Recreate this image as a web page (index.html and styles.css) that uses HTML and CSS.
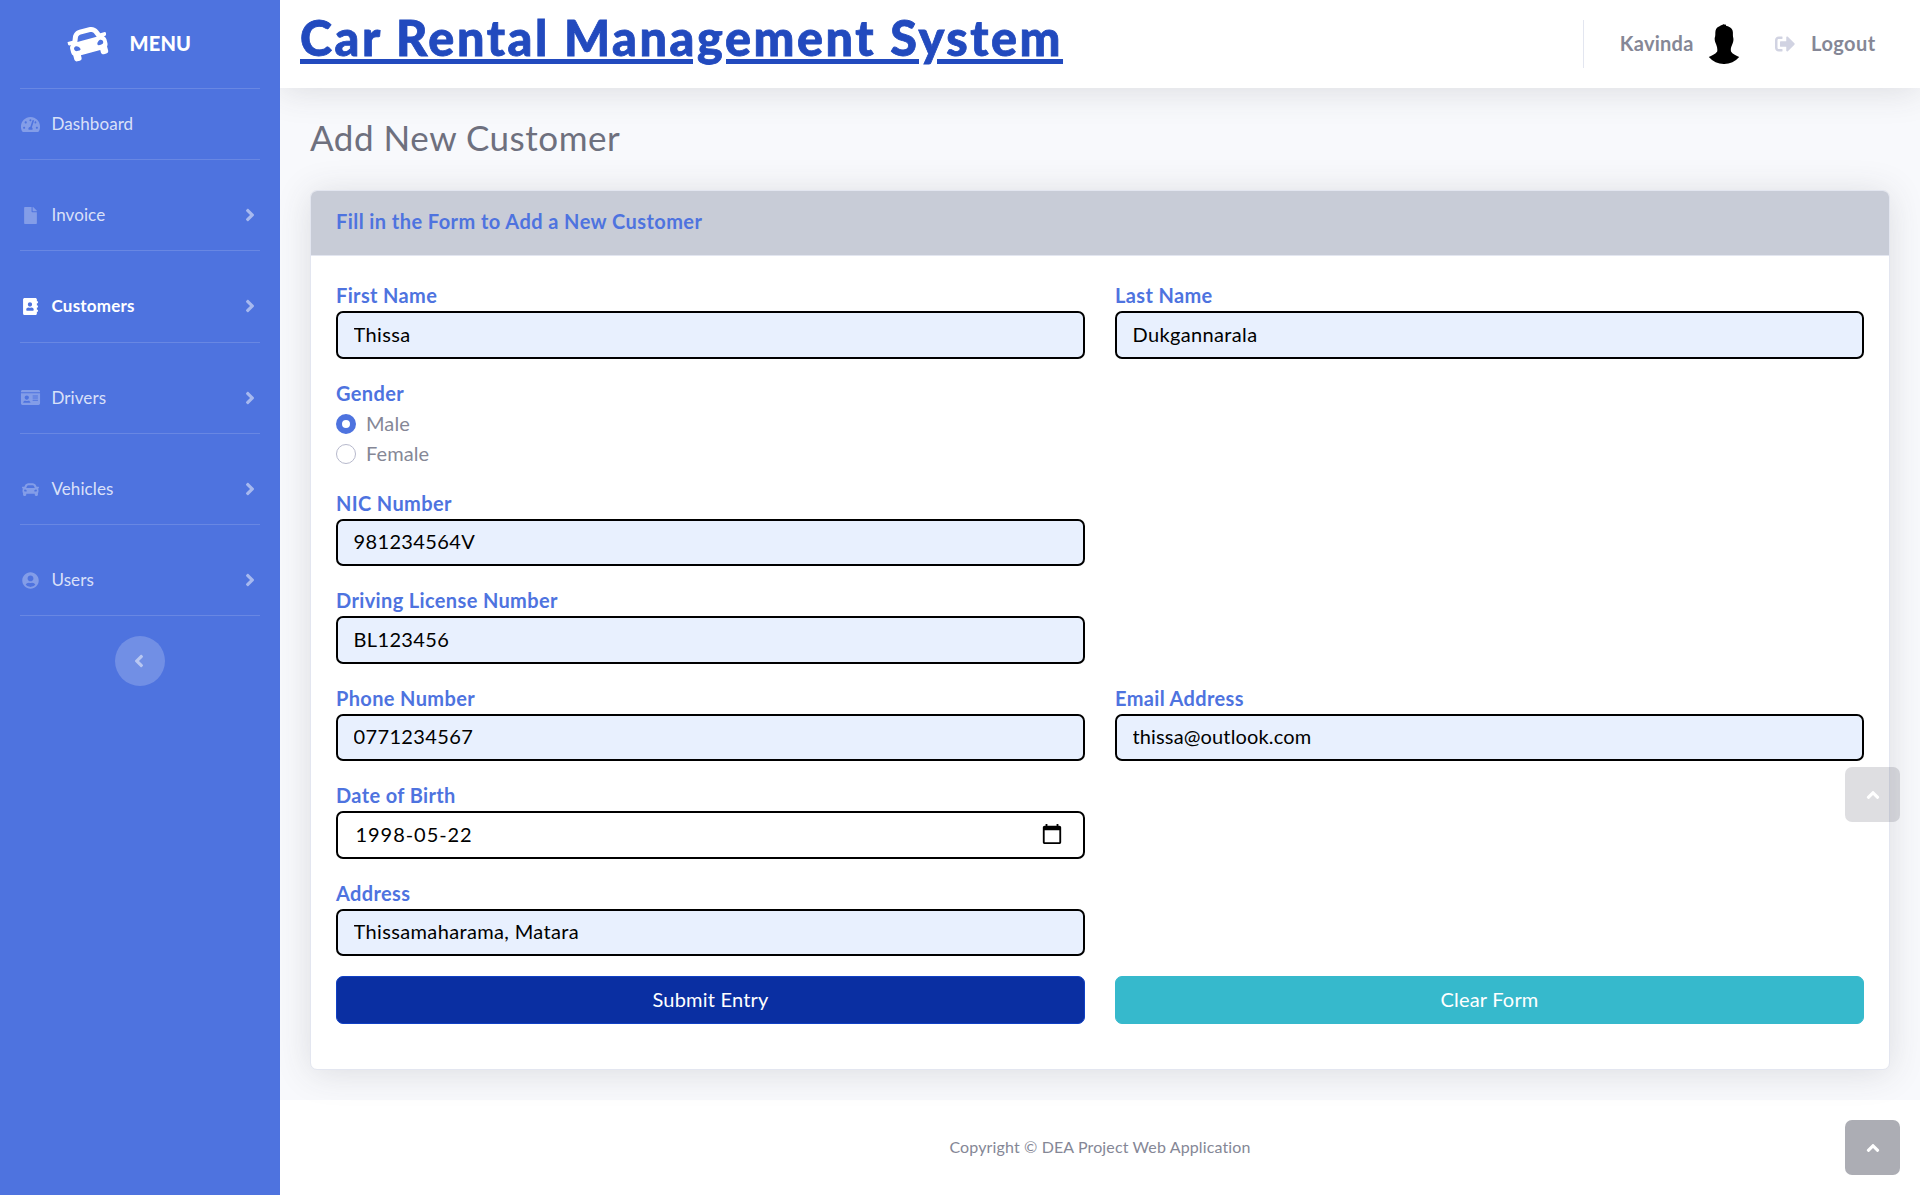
FILE: index.html
```html
<!DOCTYPE html>
<html lang="en">
<head>
<meta charset="utf-8">
<title>Car Rental Management System</title>
<link rel="stylesheet" href="styles.css">
</head>
<body>
<svg class="sprite" aria-hidden="true">
  <symbol id="car" viewBox="0 0 512 512"><path d="M499.99 176h-59.87l-16.64-41.6C406.38 91.63 365.57 64 319.5 64h-127c-46.06 0-86.88 27.63-103.99 70.4L71.87 176H12.01C4.2 176-1.53 183.34.37 190.91l6 24C7.7 220.25 12.5 224 18.01 224h20.07C24.65 235.73 16 252.78 16 272v48c0 16.12 6.16 30.67 16 41.93V416c0 17.67 14.33 32 32 32h32c17.67 0 32-14.33 32-32v-32h256v32c0 17.67 14.33 32 32 32h32c17.67 0 32-14.33 32-32v-54.07c9.84-11.25 16-25.8 16-41.93v-48c0-19.22-8.65-36.27-22.07-48H494c5.51 0 10.31-3.75 11.64-9.09l6-24c1.89-7.57-3.84-14.91-11.65-14.91zm-352.06-17.83c7.29-18.22 24.94-30.17 44.57-30.17h127c19.63 0 37.28 11.95 44.57 30.17L384 208H128l19.93-49.83zM96 319.8c-19.2 0-32-12.76-32-31.9S76.8 256 96 256s48 28.71 48 47.85-28.8 15.95-48 15.95zm320 0c-19.2 0-48 3.19-48-15.95S396.8 256 416 256s32 12.76 32 31.9-12.8 31.9-32 31.9z"/></symbol>
  <symbol id="gauge" viewBox="0 0 576 512"><path d="M288 32C128.94 32 0 160.94 0 320c0 52.8 14.25 102.26 39.06 144.8 5.61 9.62 16.3 15.2 27.44 15.2h443c11.14 0 21.83-5.58 27.44-15.2C561.75 422.26 576 372.8 576 320c0-159.06-128.94-288-288-288zm0 64c14.71 0 26.58 10.13 30.32 23.65-1.11 2.26-2.64 4.23-3.45 6.67l-9.22 27.67c-5.13 3.49-10.97 6.01-17.64 6.01-17.67 0-32-14.33-32-32S270.33 96 288 96zM96 384c-17.67 0-32-14.33-32-32s14.33-32 32-32 32 14.33 32 32-14.33 32-32 32zm48-160c-17.67 0-32-14.33-32-32s14.33-32 32-32 32 14.33 32 32-14.33 32-32 32zm246.77-72.41l-61.33 184C343.13 347.33 352 364.54 352 384c0 11.72-3.38 22.55-8.88 32H232.88c-5.5-9.45-8.88-20.28-8.88-32 0-33.94 26.5-61.43 59.9-63.59l61.34-184.01c4.17-12.56 17.73-19.45 30.36-15.17 12.57 4.19 19.35 17.79 15.17 30.36zm14.66 57.2l15.52-46.55c3.47-1.29 7.13-2.23 11.05-2.23 17.67 0 32 14.33 32 32s-14.33 32-32 32c-11.38-.01-20.89-6.28-26.57-15.22zM480 384c-17.67 0-32-14.33-32-32s14.33-32 32-32 32 14.33 32 32-14.33 32-32 32z"/></symbol>
  <symbol id="file" viewBox="0 0 384 512"><path d="M224 136V0H24C10.7 0 0 10.7 0 24v464c0 13.3 10.7 24 24 24h336c13.3 0 24-10.7 24-24V160H248c-13.2 0-24-10.8-24-24zm160-14.1v6.1H256V0h6.1c6.4 0 12.5 2.5 17 7l97.9 98c4.5 4.5 7 10.6 7 16.9z"/></symbol>
  <symbol id="book" viewBox="0 0 448 512"><path d="M436 160c6.6 0 12-5.4 12-12v-40c0-6.6-5.4-12-12-12h-20V48c0-26.5-21.5-48-48-48H48C21.5 0 0 21.5 0 48v416c0 26.5 21.5 48 48 48h320c26.5 0 48-21.5 48-48v-48h20c6.6 0 12-5.4 12-12v-40c0-6.6-5.4-12-12-12h-20v-64h20c6.6 0 12-5.4 12-12v-40c0-6.6-5.4-12-12-12h-20v-64h20zm-228-32c35.3 0 64 28.7 64 64s-28.7 64-64 64-64-28.7-64-64 28.7-64 64-64zm112 236.8c0 10.6-10 19.2-22.4 19.2H118.4C106 384 96 375.4 96 364.8v-19.2c0-31.8 30.1-57.6 67.2-57.6h5c12.3 5.1 25.7 8 39.8 8s27.6-2.9 39.8-8h5c37.1 0 67.2 25.8 67.2 57.6v19.2z"/></symbol>
  <symbol id="idcard" viewBox="0 0 576 512"><path d="M528 32H48C21.5 32 0 53.5 0 80v16h576V80c0-26.5-21.5-48-48-48zM0 432c0 26.5 21.5 48 48 48h480c26.5 0 48-21.5 48-48V128H0v304zm352-232c0-4.4 3.6-8 8-8h144c4.4 0 8 3.6 8 8v16c0 4.4-3.6 8-8 8H360c-4.4 0-8-3.6-8-8v-16zm0 64c0-4.4 3.6-8 8-8h144c4.4 0 8 3.6 8 8v16c0 4.4-3.6 8-8 8H360c-4.4 0-8-3.6-8-8v-16zm0 64c0-4.4 3.6-8 8-8h144c4.4 0 8 3.6 8 8v16c0 4.4-3.6 8-8 8H360c-4.4 0-8-3.6-8-8v-16zM176 192c35.3 0 64 28.7 64 64s-28.7 64-64 64-64-28.7-64-64 28.7-64 64-64zM67.1 396.2C75.5 370.5 99.6 352 128 352h8.2c12.3 5.1 25.7 8 39.8 8s27.6-2.9 39.8-8h8.2c28.4 0 52.5 18.5 60.9 44.2 3.2 9.9-5.2 19.8-15.6 19.8H82.7c-10.4 0-18.8-10-15.6-19.8z"/></symbol>
  <symbol id="user" viewBox="0 0 496 512"><path d="M248 8C111 8 0 119 0 256s111 248 248 248 248-111 248-248S385 8 248 8zm0 96c48.6 0 88 39.4 88 88s-39.4 88-88 88-88-39.4-88-88 39.4-88 88-88zm0 344c-58.7 0-111.3-26.6-146.5-68.2 18.8-35.4 55.6-59.8 98.5-59.8 2.4 0 4.8.4 7.1 1.1 13 4.2 26.6 6.9 40.9 6.9 14.3 0 28-2.7 40.9-6.9 2.3-.7 4.7-1.1 7.1-1.1 42.9 0 79.7 24.4 98.5 59.8C359.3 421.4 306.7 448 248 448z"/></symbol>
  <symbol id="logout" viewBox="0 0 512 512"><path d="M497 273L329 441c-15 15-41 4.5-41-17v-96H152c-13.3 0-24-10.7-24-24v-96c0-13.3 10.7-24 24-24h136V88c0-21.4 25.9-32 41-17l168 168c9.3 9.4 9.3 24.6 0 34zM192 436v-40c0-6.6-5.4-12-12-12H96c-17.7 0-32-14.3-32-32V160c0-17.7 14.3-32 32-32h84c6.6 0 12-5.4 12-12V76c0-6.6-5.4-12-12-12H96c-53 0-96 43-96 96v192c0 53 43 96 96 96h84c6.6 0 12-5.4 12-12z"/></symbol>
  <symbol id="angle" viewBox="0 0 256 512"><path d="M224.3 273l-136 136c-9.4 9.4-24.6 9.4-33.9 0l-22.6-22.6c-9.4-9.4-9.4-24.6 0-33.9l96.4-96.4-96.4-96.4c-9.4-9.4-9.4-24.6 0-33.9L54.3 103c9.4-9.4 24.6-9.4 33.9 0l136 136c9.5 9.4 9.5 24.6.1 34z"/></symbol>
</svg>

<div class="wrapper">
  <nav class="sidebar">
    <a class="brand"><svg class="brand-icon"><use href="#car"/></svg><span class="brand-text">MENU</span></a>
    <ul class="nav">
      <li class="nav-item dashboard"><a class="nav-link"><svg class="nav-icon"><use href="#gauge"/></svg><span>Dashboard</span></a></li>
      <li class="nav-item"><a class="nav-link"><svg class="nav-icon"><use href="#file"/></svg><span>Invoice</span><svg class="chevron"><use href="#angle"/></svg></a></li>
      <li class="nav-item active"><a class="nav-link"><svg class="nav-icon"><use href="#book"/></svg><span>Customers</span><svg class="chevron"><use href="#angle"/></svg></a></li>
      <li class="nav-item"><a class="nav-link"><svg class="nav-icon"><use href="#idcard"/></svg><span>Drivers</span><svg class="chevron"><use href="#angle"/></svg></a></li>
      <li class="nav-item"><a class="nav-link"><svg class="nav-icon"><use href="#car"/></svg><span>Vehicles</span><svg class="chevron"><use href="#angle"/></svg></a></li>
      <li class="nav-item"><a class="nav-link"><svg class="nav-icon"><use href="#user"/></svg><span>Users</span><svg class="chevron"><use href="#angle"/></svg></a></li>
    </ul>
    <button class="collapse"><svg class="chevron left"><use href="#angle"/></svg></button>
  </nav>

  <div class="content">
    <header class="topbar">
      <h1 class="site-title">Car Rental Management System</h1>
      <div class="topbar-right">
        <div class="divider"></div>
        <span class="user-name">Kavinda</span>
        <svg class="avatar" viewBox="0 0 40 40"><path d="M20 0C19 .8 17 1.2 15.500 2.200C12.500 3.500 11.300 5.500 11.300 9C11.400 11 11.200 12.500 10.700 14C10.500 16.500 11.200 18.500 12.200 20.500C13.200 23 13.600 25.500 13.200 27.500C11.500 30.300 8.500 31 4.800 33A20 20 0 0 0 35.200 33C31.500 31 28.500 30.300 27 27.500C26.500 25.500 27 23 28.200 20.500C29.200 18.500 29.700 16 29.300 14C28.900 12.500 28.900 11 28.900 8.500C28.700 5.500 27.500 3.400 22 1.800L22 .2L21 1Z"/></svg>
        <svg class="logout-icon"><use href="#logout"/></svg>
        <span class="logout-text">Logout</span>
      </div>
    </header>

    <main class="page">
      <h3 class="page-title">Add New Customer</h3>
      <section class="card">
        <div class="card-header">Fill in the Form to Add a New Customer</div>
        <form class="card-body">
          <label class="field"><span class="label">First Name</span><input class="control" value="Thissa"></label>
          <label class="field"><span class="label">Last Name</span><input class="control" value="Dukgannarala"></label>
          <div class="field first-col"><span class="label">Gender</span>
            <label class="radio"><i class="dot checked"></i><span class="radio-text">Male</span></label>
            <label class="radio"><i class="dot"></i><span class="radio-text">Female</span></label>
          </div>
          <label class="field first-col"><span class="label">NIC Number</span><input class="control" value="981234564V"></label>
          <label class="field first-col"><span class="label">Driving License Number</span><input class="control" value="BL123456"></label>
          <label class="field first-col"><span class="label">Phone Number</span><input class="control" value="0771234567"></label>
          <label class="field"><span class="label">Email Address</span><input class="control email" value="thissa@outlook.com"></label>
          <label class="field first-col"><span class="label">Date of Birth</span>
            <span class="control date">1998-05-22<svg class="calendar" viewBox="0 0 24 24"><path d="M20 3h-1V1h-2v2H7V1H5v2H4c-1.100 0-2 .9-2 2v16c0 1.100.9 2 2 2h16c1.100 0 2-.9 2-2V5c0-1.100-.9-2-2-2zm0 18H4V8h16v13z"/></svg></span></label>
          <label class="field first-col"><span class="label">Address</span><input class="control" value="Thissamaharama, Matara"></label>
          <button type="button" class="btn submit first-col">Submit Entry</button>
          <button type="button" class="btn clear">Clear Form</button>
        </form>
      </section>
    </main>

    <footer class="footer">Copyright © DEA Project Web Application</footer>
  </div>
</div>
<a class="to-top fading"><svg class="chevron up"><use href="#angle"/></svg></a>
<a class="to-top"><svg class="chevron up"><use href="#angle"/></svg></a>
</body>
</html>
```
FILE: styles.css
```css
* { box-sizing: border-box; }
body {
  margin: 0;
  height: 1196px;
  position: relative;
  overflow: hidden;
  background: #fff;
  color: #858796;
  font: 400 20px/30px Lato, "Open Sans", sans-serif;
}
.sprite { position: absolute; width: 0; height: 0; }
svg { fill: currentColor; flex: none; display: block; }
.wrapper { display: flex; height: 1195px; }

/* Sidebar */
.sidebar {
  width: 280px;
  flex: none;
  background: #4e73df;
  color: #fff;
  display: flex;
  flex-direction: column;
  align-items: center;
}
.brand {
  height: 88px;
  width: 100%;
  display: flex;
  align-items: center;
  padding: 0 0 3px 68px;
  gap: 21.500px;
}
.brand-icon { width: 40px; height: 40px; transform: rotate(-15deg); }
.brand-text { font-weight: 900; letter-spacing: .2px; }
.nav { list-style: none; margin: 0; padding: 0; width: 240px; }
.nav-item {
  height: 91.300px;
  border-bottom: 1px solid rgba(255,255,255,.15);
  display: flex;
  align-items: center;
  padding-top: 20px;
}
.nav-item.dashboard { height: 72px; padding-top: 0; border-top: 1px solid rgba(255,255,255,.15); }
.nav-link {
  display: flex;
  align-items: center;
  width: 100%;
  font-size: 17px;
  line-height: 26px;
  letter-spacing: .08px;
  color: rgba(255,255,255,.8);
  padding-right: 5px;
}
.nav-icon { width: 21px; height: 17px; margin-right: 10.500px; color: rgba(255,255,255,.3); }
.active .nav-link { color: #fff; font-weight: 700; letter-spacing: .22px; }
.active .nav-icon { color: #fff; }
.chevron { width: 10px; height: 20px; margin-left: auto; color: rgba(255,255,255,.5); }
.collapse {
  width: 50px;
  height: 50px;
  margin-top: 20px;
  border: 0;
  border-radius: 50%;
  background: rgba(255,255,255,.2);
  display: flex;
  align-items: center;
  justify-content: center;
  padding: 0 2px 0 0;
}
.left { transform: rotate(180deg); margin: 0; }

/* Content column */
.content {
  flex: 1;
  display: flex;
  flex-direction: column;
  overflow: hidden;
  background: #f8f9fc;
}
.topbar {
  height: 88px;
  flex: none;
  display: flex;
  justify-content: space-between;
  background: #fff;
  box-shadow: 0 3px 35px rgba(58,59,69,.15);
  position: relative;
  padding: 0 44.500px 0 20px;
}
.site-title {
  margin: 7px 0 0;
  font-size: 48.500px;
  font-weight: 900;
  line-height: 60px;
  letter-spacing: 2.580px;
  color: #224abe;
  -webkit-text-stroke: .8px #224abe;
  text-decoration: underline;
  text-decoration-thickness: 5px;
  text-underline-offset: 3px;
}
.topbar-right { display: flex; align-items: center; font-weight: 700; }
.user-name, .logout-text { padding-bottom: 2px; }
.divider { width: 1px; height: 48px; background: #e3e6f0; margin-right: 35.500px; }
.user-name { letter-spacing: .25px; margin-right: 10.500px; }
.avatar { width: 40px; height: 40px; color: #000; margin-right: 31px; }
.logout-icon { width: 20px; height: 20px; color: #d1d3e2; margin: 0 16px 1px 0; }
.logout-text { letter-spacing: .42px; }

.page { padding: 28px 30px 0; flex: none; height: 1012px; }
.page-title {
  margin: 0 0 32.500px;
  font-size: 35px;
  font-weight: 400;
  line-height: 42px;
  letter-spacing: .53px;
  color: #6e707e;
}
.card {
  position: relative;
  background: #fff;
  border: 1px solid #e3e6f0;
  border-radius: 7px;
  box-shadow: 0 3px 35px rgba(58,59,69,.15);
}
.page .card { margin-top: -.5px; }
.card-header {
  height: 65px;
  padding: 15px 25px;
  background: #c8ccd7;
  border-bottom: 1px solid #e3e6f0;
  border-radius: 6px 6px 0 0;
  color: #4e73df;
  font-weight: 700;
  letter-spacing: .43px;
}
.card-body {
  display: grid;
  grid-template-columns: 1fr 1fr;
  column-gap: 30px;
  row-gap: 20px;
  padding: 25px 25px 44.500px;
}
.field { display: flex; flex-direction: column; min-width: 0; }
.first-col { grid-column: 1; }
.label { color: #4e73df; font-weight: 700; letter-spacing: .36px; line-height: 28px; padding-bottom: 2px; }
.control {
  display: flex;
  align-items: center;
  width: 100%;
  height: 47.500px;
  padding: 0 15px 2px 15.500px;
  border: 2px solid #000;
  border-radius: 7px;
  background: #e8f0fe;
  color: #000;
  font: inherit;
  letter-spacing: .36px;
}
.email { letter-spacing: .14px; }
.date { background: #fff; padding: 0 20px 2px 17.500px; letter-spacing: .95px; }
.calendar { width: 22px; height: 22px; margin: 1px 0 0 auto; color: #000; }
.radio { display: flex; align-items: center; gap: 10px; height: 30px; }
.radio-text { padding-bottom: 2px; letter-spacing: .1px; }
.dot { width: 20px; height: 20px; border-radius: 50%; border: 1px solid #b7b9cc; background: #fff; }
.dot.checked { border: 6px solid #4e73df; }
.btn {
  height: 48px;
  padding: 0 0 2px;
  border: 1px solid;
  border-radius: 7px;
  color: #fff;
  font: inherit;
  letter-spacing: .2px;
}
.submit { background: #0a2fa2; border-color: #1040c4; }
.clear { background: #36b9cc; border-color: #36b9cc; }

.footer {
  flex: 1;
  display: flex;
  align-items: center;
  justify-content: center;
  padding-bottom: 2px;
  background: #fff;
  font-size: 16px;
  line-height: 16px;
  letter-spacing: .13px;
}

/* Scroll-to-top buttons */
.to-top {
  position: absolute;
  right: 20px;
  top: 1120px;
  width: 55px;
  height: 55px;
  border-radius: 7px;
  background: rgba(90,92,105,.5);
  display: flex;
  align-items: center;
  justify-content: center;
}
.to-top.fading { top: 767px; background: rgba(90,92,105,.2); }
.up { transform: rotate(-90deg); margin: 0; color: #fff; }
```
